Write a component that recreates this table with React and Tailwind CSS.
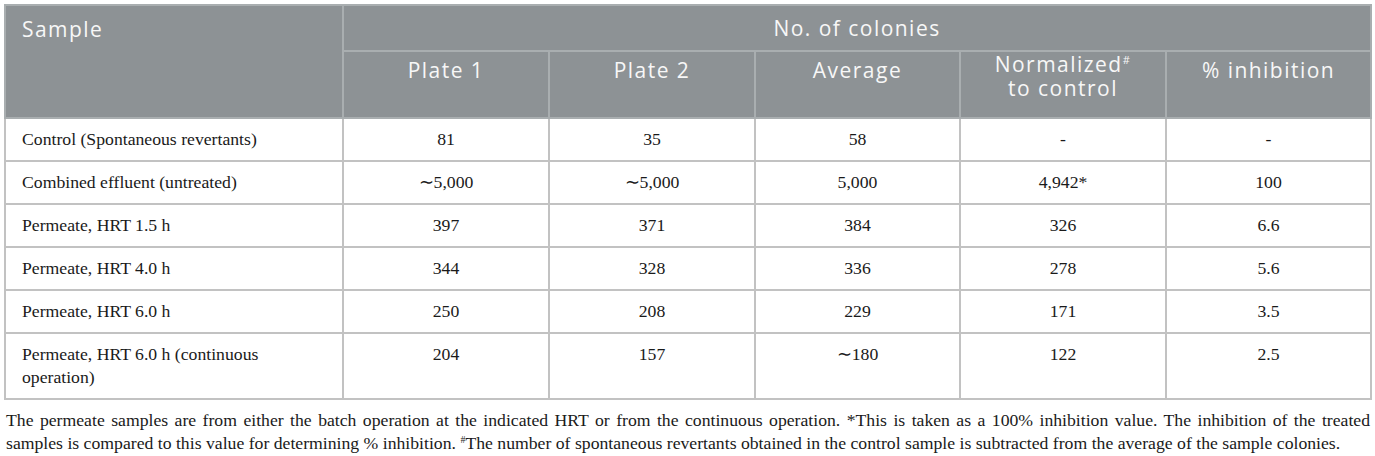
const rows = [
  { sample: "Control (Spontaneous revertants)", p1: "81", p2: "35", avg: "58", norm: "-", inh: "-" },
  { sample: "Combined effluent (untreated)", p1: "∼5,000", p2: "∼5,000", avg: "5,000", norm: "4,942*", inh: "100" },
  { sample: "Permeate, HRT 1.5 h", p1: "397", p2: "371", avg: "384", norm: "326", inh: "6.6" },
  { sample: "Permeate, HRT 4.0 h", p1: "344", p2: "328", avg: "336", norm: "278", inh: "5.6" },
  { sample: "Permeate, HRT 6.0 h", p1: "250", p2: "208", avg: "229", norm: "171", inh: "3.5" },
  { sample: "Permeate, HRT 6.0 h (continuous operation)", p1: "204", p2: "157", avg: "∼180", norm: "122", inh: "2.5" },
];

const head = "border-2 border-[#a9aeb0] font-normal text-[21px] leading-[24px] tracking-[0.07em] text-[#f7f7f7]";
const sub = `${head} text-center align-top pt-[6px]`;
const cell = "border-2 border-[#c2c2c2] px-4 pt-[9px] pb-[9px] align-top text-[17.7px] leading-[23px] text-[#1a1a1a]";

export default function App() {
  return (
    <div className="min-h-screen bg-white pl-[4px] pt-[4px]" style={{ fontFamily: "'Liberation Serif', serif" }}>
      <table className="w-[1366px] table-fixed border-collapse">
        <colgroup>
          <col className="w-[338px]" />
          <col className="w-[206px]" />
          <col className="w-[206px]" />
          <col className="w-[205px]" />
          <col className="w-[206px]" />
          <col className="w-[205px]" />
        </colgroup>
        <thead className="bg-[#8d9295]" style={{ fontFamily: "'Open Sans', sans-serif" }}>
          <tr className="h-[46px]">
            <th rowSpan={2} className={`${head} text-left align-top px-4 pt-[11px]`}>Sample</th>
            <th colSpan={5} className={`${head} text-center align-middle`}>No. of colonies</th>
          </tr>
          <tr className="h-[67px]">
            <th className={sub}>Plate 1</th>
            <th className={sub}>Plate 2</th>
            <th className={sub}>Average</th>
            <th className={`${head} text-center align-top pt-0`}>
              Normalized<span className="relative -top-[8px] text-[11px] leading-none">#</span>
              <br />to control
            </th>
            <th className={sub}>% inhibition</th>
          </tr>
        </thead>
        <tbody>
          {rows.map((r) => (
            <tr key={r.sample}>
              <td className={`${cell} text-left`}>{r.sample}</td>
              <td className={`${cell} text-center`}>{r.p1}</td>
              <td className={`${cell} text-center`}>{r.p2}</td>
              <td className={`${cell} text-center`}>{r.avg}</td>
              <td className={`${cell} text-center`}>{r.norm}</td>
              <td className={`${cell} text-center`}>{r.inh}</td>
            </tr>
          ))}
        </tbody>
      </table>
      <p className="mt-[9px] w-[1366px] pl-[2px] text-justify text-[17.7px] leading-[23px] text-[#1a1a1a]">
        The permeate samples are from either the batch operation at the indicated HRT or from the continuous operation. *This is taken as a 100% inhibition value. The inhibition of the treated samples is compared to this value for determining % inhibition. <span className="relative -top-[6px] text-[10px] leading-none">#</span>The number of spontaneous revertants obtained in the control sample is subtracted from the average of the sample colonies.
      </p>
    </div>
  );
}
